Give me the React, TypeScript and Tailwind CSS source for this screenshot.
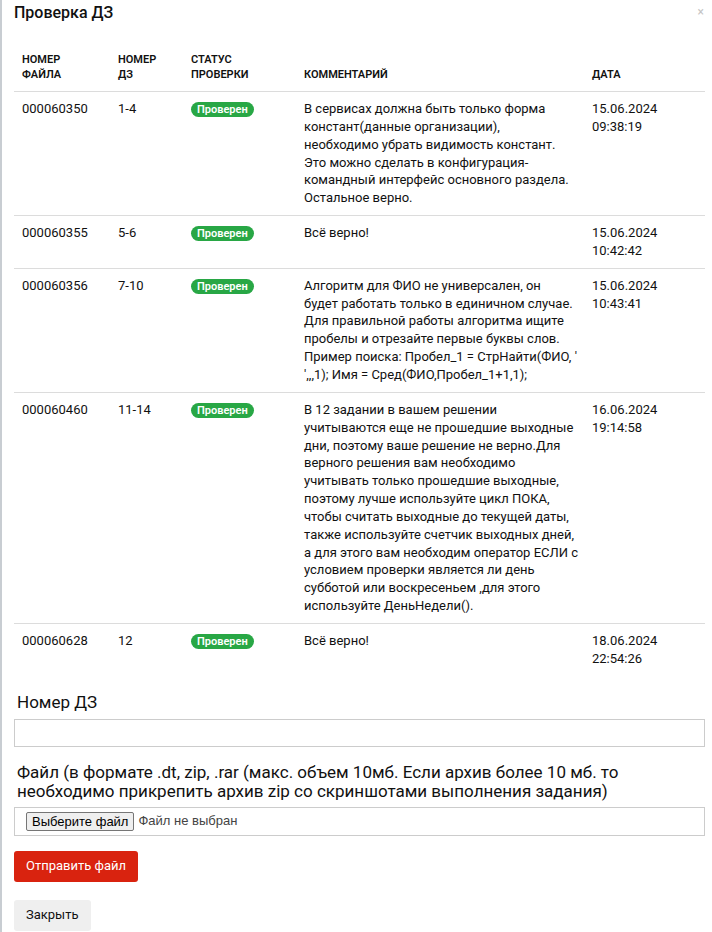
import React from "react";

type Row = {
    file: string;
    hw: string;
    comment: string[];
    date: string;
    time: string;
};

// comment lines kept as they break in the original
const rows: Row[] = [
    {
        file: "000060350",
        hw: "1-4",
        comment: [
            "В сервисах должна быть только форма",
            "констант(данные организации),",
            "необходимо убрать видимость констант.",
            "Это можно сделать в конфигурация-",
            "командный интерфейс основного раздела.",
            "Остальное верно.",
        ],
        date: "15.06.2024",
        time: "09:38:19",
    },
    { file: "000060355", hw: "5-6", comment: ["Всё верно!"], date: "15.06.2024", time: "10:42:42" },
    {
        file: "000060356",
        hw: "7-10",
        comment: [
            "Алгоритм для ФИО не универсален, он",
            "будет работать только в единичном случае.",
            "Для правильной работы алгоритма ищите",
            "пробелы и отрезайте первые буквы слов.",
            "Пример поиска: Пробел_1 = СтрНайти(ФИО, '",
            "',,,1); Имя = Сред(ФИО,Пробел_1+1,1);",
        ],
        date: "15.06.2024",
        time: "10:43:41",
    },
    {
        file: "000060460",
        hw: "11-14",
        comment: [
            "В 12 задании в вашем решении",
            "учитываются еще не прошедшие выходные",
            "дни, поэтому ваше решение не верно.Для",
            "верного решения вам необходимо",
            "учитывать только прошедшие выходные,",
            "поэтому лучше используйте цикл ПОКА,",
            "чтобы считать выходные до текущей даты,",
            "также используйте счетчик выходных дней,",
            "а для этого вам необходим оператор ЕСЛИ с",
            "условием проверки является ли день",
            "субботой или воскресеньем ,для этого",
            "используйте ДеньНедели().",
        ],
        date: "16.06.2024",
        time: "19:14:58",
    },
    { file: "000060628", hw: "12", comment: ["Всё верно!"], date: "18.06.2024", time: "22:54:26" },
];

const headers: [string, string][] = [
    ["Номер", "файла"],
    ["Номер", "ДЗ"],
    ["Статус", "проверки"],
    ["", "Комментарий"],
    ["", "Дата"],
];

function StatusBadge() {
    return (
        <span className="inline-block rounded-full bg-[#28a745] px-[6px] text-[11px] font-semibold leading-[15px] text-white">
            Проверен
        </span>
    );
}

export default function App() {
    return (
        <div className="relative h-[932px] w-[712px] overflow-hidden border-l-2 border-[#c8cdd2] bg-white pl-[12px] pr-[7px] font-['Roboto',sans-serif] text-[#111]">
            {/* Close */}
            <span className="absolute right-[8px] top-[4px] text-[12px] leading-[16px] text-[#c4c4c4]">×</span>

            <h1 className="text-[16px] font-medium leading-[26px] text-[#111]">Проверка ДЗ</h1>

            <table className="mt-[25px] w-[691px] table-fixed border-collapse">
                <colgroup>
                    <col className="w-[96px]" />
                    <col className="w-[73px]" />
                    <col className="w-[113px]" />
                    <col className="w-[288px]" />
                    <col />
                </colgroup>
                <thead>
                    <tr className="border-b border-[#dcdcdc]">
                        {headers.map(([a, b]) => (
                            <th
                                key={b}
                                className="px-2 pb-[9px] pt-[1px] text-left align-bottom text-[11px] font-semibold uppercase leading-[15px] text-[#111]"
                            >
                                {a && <div>{a}</div>}
                                <div>{b}</div>
                            </th>
                        ))}
                    </tr>
                </thead>
                <tbody>
                    {rows.map((r, i) => (
                        <tr key={r.file} className={i < rows.length - 1 ? "border-b border-[#dcdcdc]" : ""}>
                            <td className="px-2 py-2 align-top text-[13px] leading-[17.85px]">{r.file}</td>
                            <td className="px-2 py-2 align-top text-[13px] leading-[17.85px]">{r.hw}</td>
                            <td className="px-2 py-2 align-top text-[13px] leading-[17.85px]">
                                <div className="flex pt-[2px]">
                                    <StatusBadge />
                                </div>
                            </td>
                            <td className="px-2 py-2 align-top text-[13px] leading-[17.85px]">
                                {r.comment.map((line, j) => (
                                    <div key={j} className="whitespace-nowrap">
                                        {line}
                                    </div>
                                ))}
                            </td>
                            <td className="px-2 py-2 align-top text-[13px] leading-[17.85px]">
                                <div>{r.date}</div>
                                <div>{r.time}</div>
                            </td>
                        </tr>
                    ))}
                </tbody>
            </table>

            {/* Form */}
            <div className="mt-[16px]">
                <label className="block pl-[3px] text-[17px] leading-[20px] text-[#111]">Номер ДЗ</label>
                <div className="mt-[7px] h-[28px] w-[691px] border border-[#cccccc]" />

                <p className="mt-[16px] pl-[3px] text-[17px] leading-[19px] text-[#111]">
                    Файл (в формате .dt, zip, .rar (макс. объем 10мб. Если архив более 10 мб. то необходимо прикрепить архив zip со скриншотами выполнения задания)
                </p>
                <div className="mt-[6px] flex h-[29px] w-[691px] items-center border border-[#cccccc] pl-[11px] font-['Liberation_Sans',Arial,sans-serif] text-[13px]">
                    <span className="rounded-[2px] border border-[#767676] bg-[#efefef] px-[5px] leading-[17px] text-black">
                        Выберите файл
                    </span>
                    <span className="ml-[4px] text-[#444]">Файл не выбран</span>
                </div>

                <button className="mt-[15px] block h-[31px] rounded-[3px] bg-[#d9230f] px-[12px] text-[13px] text-white">
                    Отправить файл
                </button>
                <button className="mt-[18px] block h-[31px] rounded-[3px] bg-[#efefef] px-[12px] text-[13px] text-[#111]">
                    Закрыть
                </button>
            </div>
        </div>
    );
}
